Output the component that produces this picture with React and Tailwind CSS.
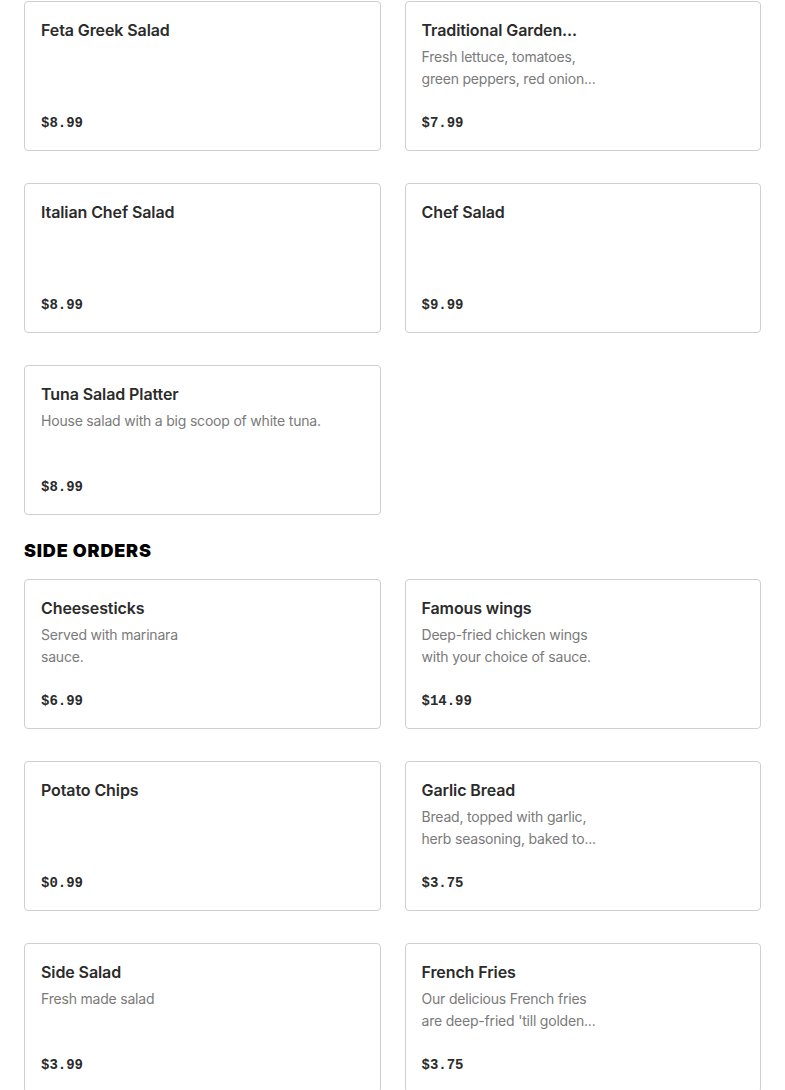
import React from "react";

const salads = [
  { name: "Feta Greek Salad", desc: [], price: "$8.99" },
  {
    name: "Traditional Garden...",
    desc: ["Fresh lettuce, tomatoes,", "green peppers, red onion..."],
    price: "$7.99",
  },
  { name: "Italian Chef Salad", desc: [], price: "$8.99" },
  { name: "Chef Salad", desc: [], price: "$9.99" },
  {
    name: "Tuna Salad Platter",
    desc: ["House salad with a big scoop of white tuna."],
    price: "$8.99",
  },
];

const sides = [
  { name: "Cheesesticks", desc: ["Served with marinara", "sauce."], price: "$6.99" },
  {
    name: "Famous wings",
    desc: ["Deep-fried chicken wings", "with your choice of sauce."],
    price: "$14.99",
  },
  { name: "Potato Chips", desc: [], price: "$0.99" },
  {
    name: "Garlic Bread",
    desc: ["Bread, topped with garlic,", "herb seasoning, baked to..."],
    price: "$3.75",
  },
  { name: "Side Salad", desc: ["Fresh made salad"], price: "$3.99" },
  {
    name: "French Fries",
    desc: ["Our delicious French fries", "are deep-fried 'till golden..."],
    price: "$3.75",
  },
];

const MenuCard = ({ item }) => (
  <div className="flex flex-col h-[150px] p-4 bg-white border border-[#cfcfcf] rounded-[4px]">
    <h3 className="text-[16px] leading-6 font-semibold text-[#2b2b2b] font-['Inter',sans-serif] tracking-[-0.1px]">
      {item.name}
    </h3>
    {item.desc.length > 0 && (
      <div className="mt-1 text-[14px] leading-[22px] text-[#7a7a7a] font-['Inter',sans-serif] tracking-[-0.2px]">
        {item.desc.map((line) => (
          <div key={line}>{line}</div>
        ))}
      </div>
    )}
    <p className="mt-auto text-[14px] leading-[22px] font-bold text-[#2b2b2b] font-['Liberation_Mono',monospace]">
      {item.price}
    </p>
  </div>
);

export default function App() {
  return (
    <div className="min-h-screen bg-white px-6 pt-[1px]">
      {/* Salads */}
      <div className="grid grid-cols-2 gap-x-6 gap-y-8">
        {salads.map((item) => (
          <MenuCard key={item.name} item={item} />
        ))}
      </div>

      {/* Side orders */}
      <h2 className="mt-6 mb-4 text-[18px] leading-6 font-black uppercase text-black font-['Inter',sans-serif] tracking-[0.8px]">
        Side Orders
      </h2>
      <div className="grid grid-cols-2 gap-x-6 gap-y-8">
        {sides.map((item) => (
          <MenuCard key={item.name} item={item} />
        ))}
      </div>
    </div>
  );
}
